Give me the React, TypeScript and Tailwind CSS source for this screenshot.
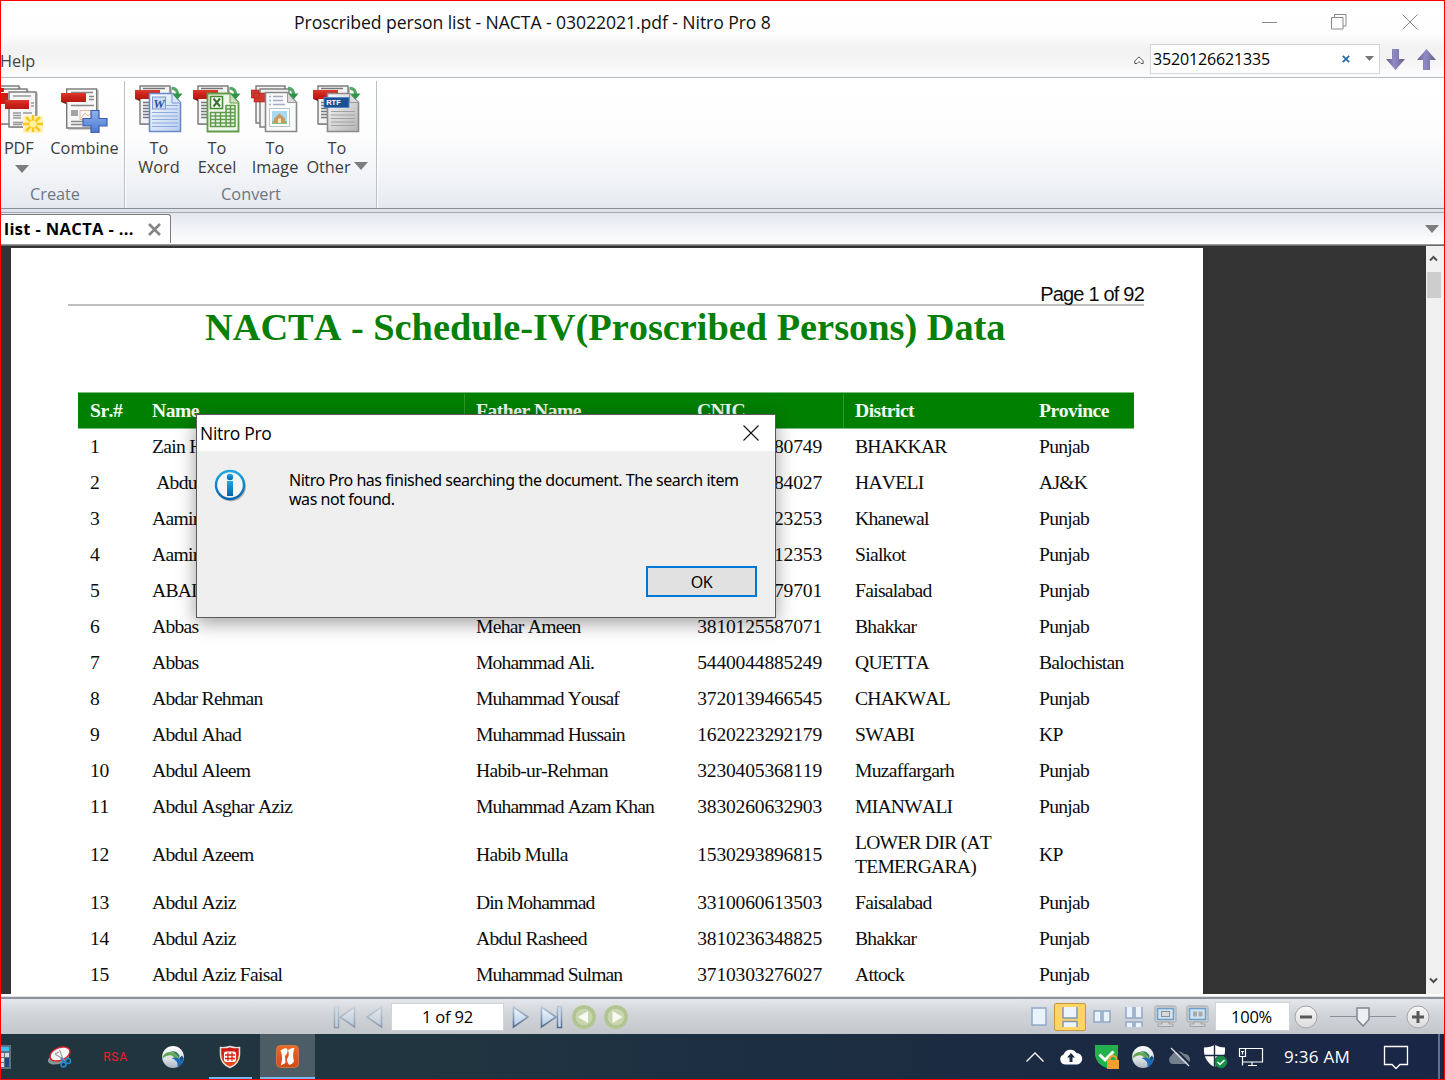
import React from "react";

const UI = "font-['Open_Sans','Noto_Sans',sans-serif]";

function Caret({ className = "" }: { className?: string }) {
  return (
    <svg width="14" height="8" viewBox="0 0 14 8" className={className}>
      <path d="M0 0H14L7 8Z" fill="#7d7d7d" />
    </svg>
  );
}

/* Sheet of a PDF with the red banner, used behind the convert icons */
function PdfSheet() {
  return (
    <g>
      <rect x="6" y="2" width="31" height="38" fill="#000" opacity=".25" />
      <rect x="5" y="1" width="30" height="38" fill="#f4f4f4" stroke="#777" strokeWidth="1.4" />
      <path d="M8 3.500h22M8 17.500h6M8 20.500h6M8 23.500h6M8 26.500h6M8 29.500h6M8 32.500h6" stroke="#777" strokeWidth="1.4" />
      <rect x="0" y="5" width="25" height="9" fill="url(#banner)" />
      <path d="M0 14h5v2z" fill="#7b1712" />
    </g>
  );
}

function GreenArrow() {
  return (
    <g>
      <path d="M37 3Q43 4 42.500 10" fill="none" stroke="#4fa863" strokeWidth="3" />
      <path d="M37.500 8.500H47.500L42.500 14.500Z" fill="#2f9447" />
    </g>
  );
}

function Defs() {
  return (
    <svg width="0" height="0" className="absolute">
      <defs>
        <linearGradient id="banner" x1="0" y1="0" x2="0" y2="1">
          <stop offset="0" stopColor="#de3a2b" />
          <stop offset=".5" stopColor="#c9211a" />
          <stop offset="1" stopColor="#b51a12" />
        </linearGradient>
        <linearGradient id="blueSheet" x1="0" y1="0" x2="1" y2="1">
          <stop offset="0" stopColor="#fff" />
          <stop offset="1" stopColor="#b7cdf0" />
        </linearGradient>
        <linearGradient id="greySheet" x1="0" y1="0" x2="1" y2="1">
          <stop offset="0" stopColor="#fafafa" />
          <stop offset="1" stopColor="#b4b4b4" />
        </linearGradient>
        <linearGradient id="plus" x1="0" y1="0" x2="0" y2="1">
          <stop offset="0" stopColor="#8fb4f0" />
          <stop offset="1" stopColor="#4a76d0" />
        </linearGradient>
        <linearGradient id="purple" x1="0" y1="0" x2="1" y2="0">
          <stop offset="0" stopColor="#62588a" />
          <stop offset=".4" stopColor="#8f8ac4" />
          <stop offset=".6" stopColor="#8580b8" />
          <stop offset="1" stopColor="#65547f" />
        </linearGradient>
        <linearGradient id="nav" x1="0" y1="0" x2="0" y2="1">
          <stop offset="0" stopColor="#f4f9fe" />
          <stop offset="1" stopColor="#b0cae3" />
        </linearGradient>
        <linearGradient id="navEdge" x1="0" y1="0" x2="0" y2="24" gradientUnits="userSpaceOnUse">
          <stop offset="0" stopColor="#c3cfdc" />
          <stop offset="1" stopColor="#4c6384" />
        </linearGradient>
        <linearGradient id="info" x1="0" y1="0" x2="0" y2="1">
          <stop offset="0" stopColor="#20a7e2" />
          <stop offset="1" stopColor="#0763ac" />
        </linearGradient>
        <linearGradient id="knob" x1="0" y1="0" x2="0" y2="1">
          <stop offset="0" stopColor="#f7f7f7" />
          <stop offset="1" stopColor="#dcdcdc" />
        </linearGradient>
        <linearGradient id="globe" x1="0" y1="0" x2="0" y2="1">
          <stop offset="0" stopColor="#fbfcfd" />
          <stop offset=".6" stopColor="#dbe1e6" />
          <stop offset="1" stopColor="#a9b6c0" />
        </linearGradient>
        <linearGradient id="nitro" x1="0" y1="0" x2="0" y2="1">
          <stop offset="0" stopColor="#ec6a23" />
          <stop offset="1" stopColor="#cf4a14" />
        </linearGradient>
        <linearGradient id="shield" x1="0" y1="0" x2="0" y2="1">
          <stop offset="0" stopColor="#c41212" />
          <stop offset="1" stopColor="#f0521f" />
        </linearGradient>
      </defs>
    </svg>
  );
}

function PdfIcon() {
  return (
    <svg width="42" height="48" viewBox="0 0 42 48" className="block">
      {[[-9, 1], [-1, 4], [8, 7]].map(([x, y], i) => (
        <g key={i}>
          <rect x={x + 2} y={y + 1} width="27" height="35" fill="#000" opacity=".2" />
          <rect x={x} y={y} width="27" height="35" fill="#f6f6f6" stroke="#777" strokeWidth="1.4" />
        </g>
      ))}
      <path d="M-1 3h4v4h-4zM-1 8h8v11h-8z" fill="#c9211a" />
      <path d="M12 11h18M12 28h8M12 30.500h8M12 33h8M12 37.500h10M12 39.500h9M30 18h3M30 21h3M22 28h9" stroke="#999" strokeWidth="1.3" />
      <rect x="4" y="15" width="24" height="9" fill="url(#banner)" />
      <rect x="22" y="31" width="20" height="17" fill="#fff2b8" />
      <path d="M32 30v17M22 39h20M25 32l14 14M39 32L25 46" stroke="#fcc81e" strokeWidth="2.600" />
      <circle cx="32" cy="39" r="3.500" fill="#fff39a" />
    </svg>
  );
}

function CombineIcon() {
  return (
    <svg width="47" height="48" viewBox="0 0 47 48" className="block">
      <rect x="7" y="5" width="31" height="40" fill="#000" opacity=".18" />
      <rect x="5.700" y="4" width="30" height="39" fill="#f7f7f7" stroke="#777" strokeWidth="1.400" />
      <path d="M10 7.500h22M28 11.500h5M28 14.500h5M10 20.500h23M10 26h7M10 28h7M10 30h7M10 36.500h12M10 39.500h11" stroke="#888" strokeWidth="1.300" />
      <path d="M19 25.500h12v9h-12zM20 33l4-5 3 3 3-3" fill="none" stroke="#e8b49c" />
      <rect x="0" y="8" width="25" height="9" fill="url(#banner)" />
      <path d="M0 17h5v2z" fill="#7b1712" />
      <path d="M30 25.500h8v8h8v7.500h-8v7h-8v-7h-8v-7.500h8z" fill="url(#plus)" stroke="#3b5cab" strokeWidth="1.200" />
    </svg>
  );
}

function WordIcon() {
  return (
    <svg width="48" height="48" viewBox="0 0 48 48" className="block">
      <PdfSheet />
      <path d="M14.500 8.500h23l8 9v29h-31z" fill="url(#blueSheet)" stroke="#6a8ac6" strokeWidth="1.600" />
      <path d="M37 8v10h9z" fill="#dbe6f8" stroke="#7d98cd" />
      <path d="M17 27.500h26M17 31h26M17 34.500h26M17 38h26M17 41.500h26M31 20.500h12M31 24h12" stroke="#8fabe0" strokeWidth="1.200" />
      <rect x="17.500" y="12" width="13" height="12" fill="#cfddf6" stroke="#7c97d0" />
      <text x="24" y="22.500" fontSize="13" fontWeight="700" fontStyle="italic" textAnchor="middle" fill="#2f54ab" fontFamily="Liberation Serif">W</text>
      <GreenArrow />
    </svg>
  );
}

function ExcelIcon() {
  return (
    <svg width="48" height="48" viewBox="0 0 48 48" className="block">
      <PdfSheet />
      <path d="M14.500 8.500h23l8 9v29h-31z" fill="#f0f8ea" stroke="#5f9b49" strokeWidth="1.800" />
      <path d="M37 8v10h9z" fill="#c9dfbd" stroke="#6ca057" />
      <rect x="17.500" y="11.500" width="12" height="12" fill="#fff" stroke="#468c35" strokeWidth="1.600" />
      <path d="M20.500 13.500l6.500 8M27 13.500l-6.500 8" stroke="#36752a" strokeWidth="2" />
      <path d="M33 20.500h9M33 24h9M17 27.500h25M17 31h25M17 34.500h25M17 38h25M17 41.500h25M17.500 27v15M22.500 27v15M27.500 27v15M33 20v22M37.500 20v22M42 20v22" stroke="#5c9c48" strokeWidth="1.500" />
      <GreenArrow />
    </svg>
  );
}

function ImageIcon() {
  return (
    <svg width="48" height="48" viewBox="0 0 48 48" className="block">
      <rect x="5" y="1" width="29" height="37" fill="#f4f4f4" stroke="#777" strokeWidth="1.400" />
      <rect x="9" y="4" width="29" height="38" fill="#f4f4f4" stroke="#777" strokeWidth="1.400" />
      <path d="M0 5h8v8H0zM3 8h11v9H3z" fill="#d2392d" stroke="#a9221a" strokeWidth=".6" />
      <path d="M14.500 7.500h22l9 10v29h-31z" fill="#fafafa" stroke="#888" strokeWidth="1.600" />
      <path d="M36.500 7.500v10h9z" fill="#d9d9d9" stroke="#999" />
      <path d="M18 11.500h2M22 11.500h10M18 15.500h2M22 15.500h10M18 19.500h2M22 19.500h12" stroke="#a5adc6" strokeWidth="1.300" />
      <rect x="18.500" y="23.500" width="20" height="18" fill="#fff" stroke="#b7c3cf" />
      <rect x="21" y="26" width="15" height="13" fill="#a9d9f2" />
      <path d="M21 36h15v3H21z" fill="#86bf88" />
      <path d="M23 33.500l5.500-5 5.500 5v4.500h-11z" fill="#c9995f" />
      <path d="M27 33.500h3v4.500h-3z" fill="#f1e3c4" />
      <GreenArrow />
    </svg>
  );
}

function RtfIcon() {
  return (
    <svg width="48" height="48" viewBox="0 0 48 48" className="block">
      <PdfSheet />
      <path d="M14.500 8.500h22l9 9v29h-31z" fill="url(#greySheet)" stroke="#8a8a8a" strokeWidth="1.600" />
      <path d="M36.500 8.500v9h9z" fill="#dadada" stroke="#999" />
      <path d="M18 26.500h24M18 30h24M18 33.500h24M18 37h24M18 40.500h24" stroke="#a2a2a2" strokeWidth="1.100" />
      <rect x="11" y="12.500" width="25" height="10" fill="#1d4f93" stroke="#4a86cc" strokeWidth=".8" />
      <text x="20.500" y="20.300" fontSize="7.500" fontWeight="700" textAnchor="middle" fill="#fff" fontFamily="Liberation Sans">RTF</text>
      <GreenArrow />
    </svg>
  );
}

function Tool({ icon, lines, className, caret }: { icon: React.ReactNode; lines: string[]; className: string; caret?: boolean }) {
  return (
    <div className={`flex flex-col items-center ${className}`}>
      {icon}
      <div className="mt-[6px] text-center text-[16.300px] leading-[19px] whitespace-nowrap text-[#3b3b3b]">
        {lines.map((l, i) => (
          <div key={l} className="flex justify-center">
            {l}
            {caret && i === 1 && <Caret className="mt-[4px] ml-[3px]" />}
          </div>
        ))}
      </div>
    </div>
  );
}

function Ribbon() {
  return (
    <div className="flex h-[130px] bg-[linear-gradient(#fff_0%,#fdfdfe_45%,#f0f2f5_80%,#e5e9ef_100%)]">
      <div className="flex w-[123px] flex-col">
        <div className="flex h-[104px] pt-[7px]">
          <div className="flex w-[48px] flex-col">
            <PdfIcon />
            <span className="mt-[6px] ml-[3px] text-[16.300px] leading-[19px] tracking-[-0.2px] text-[#3b3b3b]">PDF</span>
            <Caret className="mt-[7px] ml-[14px]" />
          </div>
          <Tool className="w-[71px]" icon={<CombineIcon />} lines={["Combine"]} />
        </div>
        <div className="mr-[15px] text-center text-[16.300px] leading-[24px] text-[#6c7684]">Create</div>
      </div>
      <div className="mt-[3px] w-[2px] border-l border-[#b9c0ca] bg-white" />
      <div className="flex w-[250px] flex-col">
        <div className="flex h-[104px] pt-[7px] pl-[4px]">
          <Tool className="w-[58px]" icon={<WordIcon />} lines={["To", "Word"]} />
          <Tool className="w-[58px]" icon={<ExcelIcon />} lines={["To", "Excel"]} />
          <Tool className="w-[58px]" icon={<ImageIcon />} lines={["To", "Image"]} />
          <Tool className="w-[66px]" icon={<RtfIcon />} lines={["To", "Other"]} caret />
        </div>
        <div className="text-center text-[16.300px] leading-[24px] text-[#6c7684]">Convert</div>
      </div>
      <div className="mt-[3px] w-[2px] border-l border-[#b9c0ca] bg-white" />
    </div>
  );
}

const rows: string[][] = [
  ["1", "Zain H", "", "80749", "BHAKKAR", "Punjab"],
  ["2", "\u00a0Abdu", "", "84027", "HAVELI", "AJ&K"],
  ["3", "Aamir", "", "23253", "Khanewal", "Punjab"],
  ["4", "Aamir", "", "12353", "Sialkot", "Punjab"],
  ["5", "ABAI", "", "79701", "Faisalabad", "Punjab"],
  ["6", "Abbas", "Mehar Ameen", "3810125587071", "Bhakkar", "Punjab"],
  ["7", "Abbas", "Mohammad Ali.", "5440044885249", "QUETTA", "Balochistan"],
  ["8", "Abdar Rehman", "Muhammad Yousaf", "3720139466545", "CHAKWAL", "Punjab"],
  ["9", "Abdul Ahad", "Muhammad Hussain", "1620223292179", "SWABI", "KP"],
  ["10", "Abdul Aleem", "Habib-ur-Rehman", "3230405368119", "Muzaffargarh", "Punjab"],
  ["11", "Abdul Asghar Aziz", "Muhammad Azam Khan", "3830260632903", "MIANWALI", "Punjab"],
  ["12", "Abdul Azeem", "Habib Mulla", "1530293896815", "LOWER DIR (AT TEMERGARA)", "KP"],
  ["13", "Abdul Aziz", "Din Mohammad", "3310060613503", "Faisalabad", "Punjab"],
  ["14", "Abdul Aziz", "Abdul Rasheed", "3810236348825", "Bhakkar", "Punjab"],
  ["15", "Abdul Aziz Faisal", "Muhammad Sulman", "3710303276027", "Attock", "Punjab"],
];

const COLS = "grid grid-cols-[62px_324px_221px_158px_184px_107px]";

function cellTracking(t: string) {
  if (/^\d+$/.test(t)) return "tracking-[-0.2px]";
  if (t === t.toUpperCase()) return "tracking-[-0.75px]";
  return /[Mm]{2}/.test(t) ? "tracking-[-0.88px]" : "tracking-[-0.72px]";
}

function PdfPage() {
  return (
    <div className="mt-[2px] ml-[10px] h-[746px] w-[1192px] overflow-hidden bg-white pt-[36px] font-['Liberation_Serif',serif] text-[19.6px] text-[#0c0c0c] [font-kerning:none]">
      <div className="ml-[57px] flex h-[22px] w-[1076px] justify-end border-b-2 border-[#bfbfbf] font-['Liberation_Sans',sans-serif] text-[20px] leading-[20px] tracking-[-0.8px] whitespace-nowrap">
        Page 1 of 92
      </div>
      <h1 className="-mt-px ml-[194px] h-[87px] text-[38.4px] leading-[44px] font-bold tracking-[-0.03px] whitespace-nowrap text-[#068006]">
        NACTA - Schedule-IV(Proscribed Persons) Data
      </h1>
      <div className="ml-[67px] w-[1056px]">
        <div className={`${COLS} h-[37px] border-y border-[#7fbf7f] bg-[#008000] pt-px font-bold tracking-[-0.5px] text-[#f2f8f2]`}>
          {["Sr.#", "Name", "Father Name", "CNIC", "District", "Province"].map((h, i) => (
            <div key={h} className={`flex items-center whitespace-nowrap ${i === 2 || i === 4 ? "border-l border-[#2f962f] pl-[11px]" : "pl-3"}`}>
              {h}
            </div>
          ))}
        </div>
        {rows.map((r) => (
          <div key={r[0]} className={`${COLS} ${r[0] === "12" ? "h-[60px]" : "h-[36px]"} items-center leading-[24px]`}>
            {r.map((c, i) => (
              <div key={i} className={`pl-3 ${i === 3 ? "pr-[21px] text-right" : ""} ${cellTracking(c)}`}>{c}</div>
            ))}
          </div>
        ))}
      </div>
    </div>
  );
}

function Dialog() {
  return (
    <div className="absolute top-[413px] left-[195px] flex h-[204px] w-[580px] flex-col border border-[#5a5a5a] bg-[#efefef] shadow-[0_5px_18px_rgba(0,0,0,0.38)]">
      <div className="flex h-[36px] items-center justify-between bg-white pr-[16px] pl-[3px] text-[17.500px] tracking-[-0.300px] text-black">
        <span className="mt-px">Nitro Pro</span>
        <svg width="16" height="16" viewBox="0 0 16 16"><path d="M.5.5l15 15M15.500.5l-15 15" stroke="#111" strokeWidth="1.100" /></svg>
      </div>
      <div className="flex pt-[18px] pl-[17px]">
        <svg width="33" height="33" viewBox="0 0 33 33">
          <circle cx="17" cy="17.500" r="15" fill="#000" opacity=".25" />
          <circle cx="16" cy="16" r="14" fill="#f3f5f7" stroke="url(#info)" strokeWidth="2.400" />
          <circle cx="16" cy="8" r="3.200" fill="url(#info)" />
          <rect x="13" y="12" width="6" height="15" fill="url(#info)" />
        </svg>
        <div className="mt-[2px] ml-[42px] font-['Noto_Sans',sans-serif] text-[16px] leading-[19px] tracking-[-0.46px] whitespace-nowrap text-black">
          Nitro Pro has finished searching the document. The search item
          <br />
          was not found.
        </div>
      </div>
      <button className="mt-auto mr-[18px] mb-[20px] ml-auto h-[31px] w-[111px] border-2 border-[#0078d7] bg-[#e1e1e1] font-['Noto_Sans',sans-serif] text-[16px] leading-none tracking-[-0.5px] text-black">
        OK
      </button>
    </div>
  );
}

function NavIcon({ kind, faded }: { kind: "first" | "prev" | "next" | "last"; faded?: boolean }) {
  const bar = kind === "first" || kind === "last";
  const flip = kind === "first" || kind === "prev";
  return (
    <svg width={bar ? 23 : 17} height="24" viewBox={bar ? "0 0 23 24" : "0 0 17 24"} className={faded ? "opacity-50" : ""}>
      <g transform={flip ? `translate(${bar ? 23 : 17} 0) scale(-1 1)` : undefined}>
        <path d="M1.500 2v20L16 12z" fill="url(#nav)" stroke="url(#navEdge)" strokeWidth="1.600" />
        {bar && <rect x="17.500" y="1.500" width="4" height="21" fill="#c6dcf0" stroke="url(#navEdge)" strokeWidth="1.500" />}
      </g>
    </svg>
  );
}

function GreenCircle({ left }: { left?: boolean }) {
  return (
    <svg width="24" height="24" viewBox="0 0 24 24">
      <circle cx="12" cy="12" r="12" fill="#b3c592" />
      <circle cx="12" cy="12" r="9" fill="#c8d6ae" stroke="#b0c08c" />
      <path d={left ? "M16 6v12L6 12z" : "M8.500 6v12L18.500 12z"} fill="#f8faf4" />
    </svg>
  );
}

function Monitor({ two }: { two?: boolean }) {
  return (
    <svg width="23" height="23" viewBox="0 0 23 23">
      <rect x="1" y="1" width="21" height="16" rx="1.500" fill="#d7d7d7" stroke="#a3a3a3" />
      <rect x="3.500" y="3.500" width="16" height="11" fill="#cfe3f3" stroke="#6f9fc7" strokeWidth="1.600" />
      {two ? <path d="M7 6.500h4v5H7zM12.500 6.500h4v5h-4z" fill="#a9a9a9" /> : <rect x="7.500" y="6.500" width="8" height="5" fill="#d9d9d9" stroke="#8f8f8f" />}
      <path d="M8 17h7v2h4v2.500H4V19h4z" fill="#d5d5d5" stroke="#999" strokeWidth=".8" />
    </svg>
  );
}

const SHEET = "fill-[#eaf2fb] stroke-[#8fa9c7]";

function StatusBar() {
  return (
    <div className="flex h-[37px] items-center border-t-2 border-[#8c939c] bg-[linear-gradient(#e4e6ea,#d2d5da_40%,#c3c6cb)]">
      <div className="ml-[332px] flex items-center">
        <NavIcon kind="first" faded />
        <span className="ml-[10px] flex"><NavIcon kind="prev" faded /></span>
        <div className="ml-[8px] flex h-[28px] w-[113px] items-center justify-center border border-[#d0d3d7] bg-white pt-[2px] text-[16.500px] tracking-[-0.2px] text-black">1 of 92</div>
        <span className="ml-[8px] flex"><NavIcon kind="next" /></span>
        <span className="ml-[11px] flex"><NavIcon kind="last" /></span>
        <span className="ml-[9px] flex gap-[8px]"><GreenCircle left /><GreenCircle /></span>
      </div>
      <div className="ml-auto flex items-center">
        <svg width="16" height="19" viewBox="0 0 16 19"><rect x="1" y="1" width="14" height="17" className={SHEET} strokeWidth="1.500" /></svg>
        <div className="ml-[7px] flex h-[28px] w-[32px] items-center justify-center rounded-[2px] border border-[#c9973a] bg-[#ffd567]">
          <svg width="16" height="20" viewBox="0 0 16 20">
            <path d="M1 0h14v11H1zM1 15h14v5H1z" fill="#eef4fb" />
            <path d="M1 0v11h14V0M1 20v-5.500h14V20" fill="none" stroke="#7f97b4" strokeWidth="1.500" />
          </svg>
        </div>
        <svg width="18" height="14" viewBox="0 0 18 14" className="ml-[7px]"><path d="M1 1h7v11H1zM10 1h7v11h-7z" className={SHEET} strokeWidth="1.500" /></svg>
        <svg width="18" height="20" viewBox="0 0 18 20" className="ml-[14px]"><path d="M1 0v11h7V0M10 0v11h7V0M1 20v-5h7v5M10 20v-5h7v5" className={SHEET} strokeWidth="1.500" /></svg>
        <span className="ml-[11px] flex gap-[9px]"><Monitor /><Monitor two /></span>
        <div className="ml-[6px] flex h-[29px] w-[75px] items-center justify-center border border-[#d0d3d7] bg-white pt-[2px] pr-[2px] text-[16.500px] tracking-[-0.2px] text-black">100%</div>
        <svg width="24" height="24" viewBox="0 0 24 24" className="ml-[4px]"><circle cx="12" cy="12" r="11" fill="url(#knob)" stroke="#a2a4a8" /><rect x="6" y="10.500" width="12" height="3" fill="#595959" /></svg>
        <div className="ml-[12px] flex w-[66px] items-center">
          <div className="h-px flex-1 bg-[#8b9096]" />
          <svg width="14" height="20" viewBox="0 0 14 20"><path d="M1 1h12v11.500L7 19 1 12.500z" fill="#edf0f3" stroke="#7f8790" strokeWidth="1.500" /></svg>
          <div className="h-px flex-1 bg-[#8b9096]" />
        </div>
        <svg width="24" height="24" viewBox="0 0 24 24" className="mr-[14px] ml-[10px]"><circle cx="12" cy="12" r="11" fill="url(#knob)" stroke="#a2a4a8" /><path d="M6 10.500h4.500V6h3v4.500H18v3h-4.500V18h-3v-4.500H6z" fill="#595959" /></svg>
      </div>
    </div>
  );
}

function GlobeIcon() {
  return (
    <svg width="24" height="24" viewBox="0 0 24 24">
      <circle cx="12" cy="12" r="10.900" fill="url(#globe)" />
      <path d="M1.500 13.500Q2 8 8 7Q15 6.500 17.500 14L13 12.500Q11 9.500 7.500 10.500Q4 11 1.500 13.500z" fill="#64a64f" />
      <path d="M9 6.500Q15.500 5 18.500 10.500L18 14Q15.500 7.500 9 6.500z" fill="#2f7a56" />
      <path d="M10.500 13Q16 11.500 19 14.500L22.800 13Q22 20 16.500 22Q17.500 15.500 10.500 13z" fill="#1c69b4" />
      <path d="M18 13.500l3-3 1.800 3-3 2z" fill="#174f8c" />
    </svg>
  );
}

function Taskbar() {
  return (
    <div className="flex h-[45px] items-stretch bg-[linear-gradient(90deg,#20353e_0%,#20353f_30%,#1d3142_45%,#1b2a42_75%,#1a2646_100%)] text-white">
      <div className="flex w-[11px] items-center">
        <svg width="10" height="24" viewBox="0 0 10 24">
          <path d="M0 0h10v24H0z" fill="#60707c" />
          <path d="M0 2h8v4H0z" fill="#38c2f2" />
          <path d="M0 8h3v4H0zM4 8h4v4H4zM0 13h3v4H0zM0 18h3v4H0z" fill="#d5dde3" />
          <path d="M4 13h4v9H4z" fill="#164b8f" />
        </svg>
      </div>
      <div className="ml-[35px] flex w-[26px] items-center">
        <svg width="26" height="24" viewBox="0 0 26 24">
          <ellipse cx="11.500" cy="13.500" rx="11" ry="5.500" fill="#8d9598" transform="rotate(-16 11.500 13.500)" />
          <ellipse cx="13" cy="9" rx="10.500" ry="6.300" fill="#f7f7f7" stroke="#d5232c" strokeWidth="1.400" transform="rotate(-22 13 9)" />
          <path d="M12.500 5l4 10M8 9l8 5M8 9l4-2" stroke="#999" strokeWidth="1.100" fill="none" />
          <path d="M14 13l3 4" stroke="#2389c9" strokeWidth="1.600" />
          <circle cx="16.500" cy="19.500" r="2.400" fill="none" stroke="#2389c9" strokeWidth="1.700" />
          <circle cx="21" cy="16" r="2.500" fill="none" stroke="#2389c9" strokeWidth="1.700" />
        </svg>
      </div>
      <div className="flex w-[85px] items-center justify-center pt-px font-['Roboto',sans-serif] text-[12px] tracking-[0.800px] text-[#ee1c2e]">RSA</div>
      <div className="flex w-[29px] items-center justify-center"><GlobeIcon /></div>
      <div className="ml-[22px] flex w-[43px] items-center justify-center border-b-2 border-[#76b9ed] pt-[2px] pr-px">
        <svg width="22" height="24" viewBox="0 0 22 24">
          <path d="M1.500 2.500Q7 3 11 1.500Q15 3 20.500 2.500V10Q20 19 11 22.500Q2 19 1.500 10z" fill="url(#shield)" stroke="#e8e2dc" strokeWidth="1.500" />
          <rect x="5" y="6.500" width="12" height="10.500" rx="2" fill="#fff" />
          <path d="M6 10h10M6 13.500h10M9 7.500v8.500M13 7.500v8.500" stroke="#d9230f" strokeWidth="1.300" />
        </svg>
      </div>
      <div className="ml-[8px] flex w-[55px] items-center justify-center border-b-2 border-[#76b9ed] bg-[#4c5d66] pt-[2px] pr-px">
        <svg width="23" height="23" viewBox="0 0 23 23">
          <rect x=".5" y=".5" width="22" height="22" rx="4" fill="url(#nitro)" stroke="#f08a4e" strokeWidth=".6" />
          <path d="M4.500 5.500L8 3.500Q10.500 2.500 11.500 4.500Q12 8 9 11L9.500 18Q7 19 4.800 20.500Q7.500 12 4.500 5.500z" fill="#fff" />
          <path d="M12 5Q14.500 3 18.500 2.800Q16 10 18 16.500Q16 20 13 19.800Q10.800 18 11 14Q14 10.500 12 5z" fill="#fff" />
        </svg>
      </div>

      <div className="ml-auto flex items-center">
        <svg width="20" height="12" viewBox="0 0 20 12"><path d="M1.500 10.500L10 2l8.500 8.500" fill="none" stroke="#fff" strokeWidth="1.300" /></svg>
        <svg width="24" height="18" viewBox="0 0 24 18" className="ml-[14px]">
          <path d="M6 16.500A5.200 5.200 0 0 1 4.500 6.500A7.300 7.300 0 0 1 17.500 5A5.800 5.800 0 0 1 18.500 16.500z" fill="#fff" />
          <path d="M12 5l4 4.500h-2.500V14h-3V9.500H8z" fill="#1b2b42" />
        </svg>
        <svg width="24" height="24" viewBox="0 0 24 24" className="ml-[12px]">
          <path d="M0 0H23V10Q22 19 11.500 23Q1 19 0 10z" fill="#22b14c" />
          <path d="M4.500 9.500l5.500 5.500 8.500-8.500" fill="none" stroke="#fff" strokeWidth="3" />
          <rect x="12" y="15" width="12" height="9" fill="#f0a02c" />
          <path d="M14.500 15v-1a3.500 3 0 0 1 7 0v1" fill="none" stroke="#f0a02c" strokeWidth="2" />
        </svg>
        <span className="ml-[12px] flex"><GlobeIcon /></span>
        <svg width="25" height="20" viewBox="0 0 25 20" className="ml-[12px]">
          <path d="M5 17A4.700 4.700 0 0 1 4.500 8.500A7.500 7.500 0 0 1 17 7A5.300 5.300 0 0 1 20 17z" fill="#75808f" />
          <path d="M6 0l18 18" stroke="#1b2a42" strokeWidth="2" />
          <path d="M4 1l18 18" stroke="#dfe3e8" strokeWidth="1.300" />
        </svg>
        <svg width="25" height="25" viewBox="0 0 25 25" className="ml-[11px]">
          <path d="M1 3.500Q8 3.500 11.500 .8Q16 3.500 22 3.500Q23 17 11.500 23Q0 17 1 3.500z" fill="#fff" />
          <path d="M11.500 1v22M1 11.500h22" stroke="#1b2843" strokeWidth="1.400" />
          <circle cx="18" cy="18" r="6.500" fill="#178e46" stroke="#1b2843" strokeWidth=".6" />
          <path d="M14.500 18l2.500 2.500 4.500-4.500" fill="none" stroke="#fff" strokeWidth="1.500" />
        </svg>
        <svg width="26" height="20" viewBox="0 0 26 20" className="ml-[10px]">
          <path d="M8 1.500h16.500v13.500H5M14 15v3M10 18.500h9M1.500 1.500h6v8h-6zM4.500 9.500V18.500M3 4.500h3M4.500 4.500v3" fill="none" stroke="#fff" strokeWidth="1.200" />
        </svg>
        <span className="ml-[20px] w-[68px] pt-px text-[17px] tracking-[0.300px] whitespace-nowrap">9:36 AM</span>
        <svg width="26" height="26" viewBox="0 0 26 26" className="ml-[31px]">
          <path d="M1.500 2.500h23v18H17l-4 4-4-4H1.500z" fill="none" stroke="#fff" strokeWidth="1.300" />
        </svg>
      </div>
      <div className="ml-[29px] w-[6px] border-l-2 border-[#66708a]" />
    </div>
  );
}

export default function App() {
  return (
    <div className={`relative flex h-[1080px] w-[1445px] flex-col overflow-hidden border border-[#ff0000] bg-white ${UI}`}>
      <Defs />
      <div className="flex h-[76px] flex-col bg-[linear-gradient(#fff_0%,#fefefe_42%,#f2f2f2_62%,#f3f3f3_72%,#fcfcfc_100%)]">
        <div className="flex h-[42px] items-center pl-[293px]">
          <span className="mt-px w-[480px] text-[17.600px] tracking-[-0.070px] whitespace-nowrap text-[#111]">
            Proscribed person list - NACTA - 03022021.pdf - Nitro Pro 8
          </span>
          <div className="mr-[26px] ml-auto flex items-center">
            <div className="mr-[54px] h-px w-[15px] bg-[#888]" />
            <svg width="16" height="16" viewBox="0 0 16 16" className="mr-[55px]"><path d="M.5 3.500h11.500v11.500H.5zM3.500 3.500V.5h11.500v11.500h-3" fill="none" stroke="#888" /></svg>
            <svg width="16" height="16" viewBox="0 0 16 16"><path d="M.5.5l15 15M15.500.5l-15 15" stroke="#888" /></svg>
          </div>
        </div>
        <div className="flex h-[32px] items-center">
          <span className="-ml-px mt-[4px] text-[16.300px] text-[#444]">Help</span>
          <svg width="10" height="9" viewBox="0 0 10 9" className="mt-[2px] ml-auto"><path d="M.8 5L5 .8 9.200 5v2.500H7L5 5.500 3 7.500H.8z" fill="#fff" stroke="#555" /></svg>
          <div className="ml-[6px] flex h-[30px] w-[230px] items-center border border-[#d2d5d9] bg-white px-[2px] pr-[5px] text-[16px] tracking-[-0.150px] text-black">
            <span>3520126621335</span>
            <svg width="8" height="8" viewBox="0 0 8 8" className="ml-auto"><path d="M.8.8l6.400 6.400M7.200.8L.8 7.200" stroke="#2c6aa5" strokeWidth="1.800" /></svg>
            <svg width="9" height="5" viewBox="0 0 9 5" className="-mt-px ml-[15px]"><path d="M0 0h9L4.500 5z" fill="#777" /></svg>
          </div>
          <svg width="19" height="21" viewBox="0 0 19 21" className="ml-[6px]"><path d="M6 0h7v10h6L9.500 21 0 10h6z" fill="url(#purple)" /></svg>
          <svg width="19" height="21" viewBox="0 0 19 21" className="mr-[8px] ml-[12px]"><path d="M6 21h7V11h6L9.500 0 0 11h6z" fill="url(#purple)" /></svg>
        </div>
      </div>
      <div className="h-px bg-[#b3bcc5]" />
      <Ribbon />
      <div className="h-[5px] border-y border-t-[#868e9a] border-b-[#a0a8b3] bg-[#dfe3e9]" />
      <div className="flex h-[31px] items-start justify-between bg-[linear-gradient(#e3e7ee,#fff)]">
        <div className="mt-px flex h-[29px] w-[170px] items-center rounded-tr-[3px] border-t border-r border-[#7d7d7d] bg-white pl-[3px] text-[16.500px] font-bold text-black">
          <span className="w-[144px] tracking-[0.350px] whitespace-nowrap">list - NACTA - ...</span>
          <svg width="13" height="13" viewBox="0 0 13 13"><path d="M1 1l11 11M12 1L1 12" stroke="#858585" strokeWidth="2.600" /></svg>
        </div>
        <Caret className="mt-[12px] mr-[5px]" />
      </div>
      <div className="h-[2px] border-b border-[#6b6b6b] bg-[#999]" />
      <div className="flex h-[748px] justify-between bg-[#333]">
        <PdfPage />
        <div className="flex w-[18px] flex-col items-center bg-[#f0f0f0] pr-[3px]">
          <svg width="9" height="7" viewBox="0 0 9 7" className="mt-[9px]"><path d="M1 5.500L4.500 2 8 5.500" fill="none" stroke="#505050" strokeWidth="2" /></svg>
          <div className="mt-[10px] h-[26px] w-[14px] bg-[#cdcdcd]" />
          <svg width="9" height="7" viewBox="0 0 9 7" className="mt-auto mb-[10px]"><path d="M1 1.500L4.500 5 8 1.500" fill="none" stroke="#505050" strokeWidth="2" /></svg>
        </div>
      </div>
      <div className="h-[3px] border-b border-[#e2e2e2] bg-white" />
      <StatusBar />
      <Taskbar />
      <Dialog />
    </div>
  );
}
